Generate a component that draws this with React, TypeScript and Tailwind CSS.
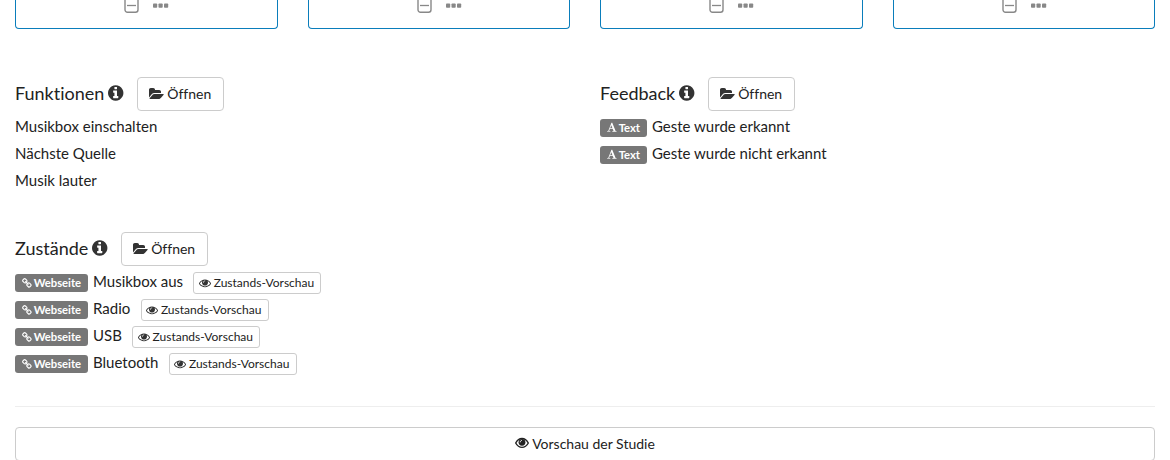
import React from "react";

const GLYPHS = {
  info: { w: 1536, x: 128, d: "M1152 1376v-160q0-14-9-23t-23-9h-96v-512q0-14-9-23t-23-9h-320q-14 0-23 9t-9 23v160q0 14 9 23t23 9h96v320h-96q-14 0-23 9t-9 23v160q0 14 9 23t23 9h448q14 0 23-9t9-23zm-128-896v-160q0-14-9-23t-23-9h-192q-14 0-23 9t-9 23v160q0 14 9 23t23 9h192q14 0 23-9t9-23zm640 416q0 209-103 385.5t-279.5 279.5-385.5 103-385.5-103-279.5-279.5-103-385.5 103-385.5 279.5-279.5 385.5-103 385.5 103 279.5 279.5 103 385.5z" },
  eye: { w: 1792, x: 0, d: "M1664 960q-152-236-381-353 61 104 61 225 0 185-131.5 316.5t-316.5 131.5-316.5-131.5-131.5-316.5q0-121 61-225-229 117-381 353 133 205 333.5 326.5t434.5 121.5 434.5-121.5 333.5-326.5zm-720-384q0-20-14-34t-34-14q-125 0-214.5 89.5t-89.5 214.5q0 20 14 34t34 14 34-14 14-34q0-86 61-147t147-61q20 0 34-14t14-34zm848 384q0 34-20 69-140 230-376.5 368.5t-499.5 138.5-499.5-139-376.5-368q-20-35-20-69t20-69q140-229 376.5-368t499.5-139 499.5 139 376.5 368q20 35 20 69z" },
  link: { w: 1664, x: 64, d: "M1520 1216q0-40-28-68l-208-208q-28-28-68-28-42 0-72 32 3 3 19 18.5t21.5 21.5 15 19 13 25.5 3.5 27.5q0 40-28 68t-68 28q-15 0-27.5-3.5t-25.5-13-19-15-21.5-21.5-18.5-19q-33 31-33 73 0 40 28 68l206 207q27 27 68 27 40 0 68-26l147-146q28-28 28-67zm-703-705q0-40-28-68l-206-207q-28-28-68-28-39 0-68 27l-147 146q-28 28-28 67 0 40 28 68l208 208q27 27 68 27 42 0 72-31-3-3-19-18.5t-21.5-21.5-15-19-13-25.5-3.5-27.5q0-40 28-68t68-28q15 0 27.5 3.5t25.5 13 19 15 21.5 21.5 18.5 19q33-31 33-73zm895 705q0 120-85 203l-147 146q-83 83-203 83-121 0-204-85l-206-207q-83-83-83-203 0-123 88-209l-88-88q-86 88-208 88-120 0-204-84l-208-208q-84-84-84-204t85-203l147-146q83-83 203-83 121 0 204 85l206 207q83 83 83 203 0 123-88 209l88 88q86-88 208-88 120 0 204 84l208 208q84 84 84 204z" },
  folder: { w: 1920, x: 0, d: "M1879 952q0 31-31 66l-336 396q-43 51-120.5 86.5t-143.5 35.5h-1088q-34 0-60.5-13t-26.5-43q0-31 31-66l336-396q43-51 120.5-86.5t143.5-35.5h1088q34 0 60.5 13t26.5 43zm-343-344v160h-832q-94 0-197 47.5t-164 119.5l-337 396-5 6q0-4-.5-12.5t-.5-12.5v-960q0-92 66-158t158-66h320q92 0 158 66t66 158v32h544q92 0 158 66t66 158z" },
  font: { w: 1664, x: 0, d: "M725 559l-170 450q33 0 136.5 2t160.5 2q19 0 57-2-87-253-184-452zm-725 1105l2-79q23-7 56-12.5t57-10.5 49.5-14.5 44.5-29 31-50.5l237-616 280-724h128q8 14 11 21l205 480q33 78 106 257.5t114 274.5q15 34 58 144.5t72 168.5q20 45 35 57 19 15 88 29.5t84 20.5q6 38 6 57 0 4-.5 13t-.5 13q-63 0-190-8t-191-8q-76 0-215 7t-178 8q0-43 4-78l131-28q1 0 12.5-2.5t15.5-3.5 14.5-4.5 15-6.5 11-8 9-11 2.5-14q0-16-31-96.5t-72-177.5-42-100l-450-2q-26 58-76.5 195.5t-50.5 162.5q0 22 14 37.5t43.5 24.5 48.5 13.5 57 8.5 41 4q1 19 1 58 0 9-2 27-58 0-174.5-10t-174.5-10q-8 0-26.5 4t-21.5 4q-80 14-188 14z" },
};

function Icon({ name, className = "" }: { name: keyof typeof GLYPHS; className?: string }) {
  const g = GLYPHS[name];
  return (
    <svg viewBox={`${g.x} 0 ${g.w} 1792`} className={`h-[1em] w-auto shrink-0 ${className}`} fill="currentColor" aria-hidden="true">
      <path d={g.d} />
    </svg>
  );
}

function BoldEye() {
  return (
    <svg width="14" height="12" viewBox="0 0 14 12" className="shrink-0" aria-hidden="true">
      <path d="M.7 6C2.2 3.2 4.4 1.5 7 1.5S11.8 3.2 13.3 6C11.8 8.8 9.6 10.4 7 10.4S2.2 8.8.7 6z" fill="none" stroke="currentColor" strokeWidth="1.4" />
      <circle cx="7" cy="5.3" r="3.4" fill="currentColor" />
      <path d="M5.2 5.3C5.2 4.3 5.8 3.6 6.9 3.4" fill="none" stroke="white" strokeWidth="1" />
    </svg>
  );
}

function SectionHeader({ title }: { title: string }) {
  return (
    <div className="flex h-[34px] items-center">
      <h4 className="flex items-center gap-1 pb-[2px] text-[18px] leading-[32px]">
        {title}
        <Icon name="info" className="text-[18px] text-[#333]" />
      </h4>
      <button className="ml-[12.85px] flex h-[34px] w-[87.3px] items-center justify-center gap-[3px] rounded-[4px] border border-[#ccc] text-[14px]">
        <Icon name="folder" className="text-[#333]" />
        <span className="pb-[2px]">Öffnen</span>
      </button>
    </div>
  );
}

function Tag({ icon, label, className }: { icon: "font" | "link"; label: string; className: string }) {
  return (
    <span className={`mt-[2px] mr-[5px] flex h-[18px] items-center justify-center gap-[2px] rounded-[3px] bg-[#777] text-[11.25px] font-bold text-white ${className}`}>
      <Icon name={icon} className={icon === "link" ? "mt-px text-[10.5px]" : "text-[10.5px]"} />
      {label}
    </span>
  );
}

function StateRow({ name }: { name: string }) {
  return (
    <li className="flex h-[27px] items-center">
      <Tag icon="link" label="Webseite" className="w-[73px]" />
      {name}
      <button className="mt-[2px] ml-[10.4px] flex h-[22px] w-[128px] items-center justify-center gap-[3px] rounded-[3px] border border-[#ccc] pr-[2px] text-[12px]">
        <Icon name="eye" className="text-[#333]" />
        Zustands-Vorschau
      </button>
    </li>
  );
}

function ElementCard() {
  return (
    <div className="flex h-[29px] justify-center rounded-b-[4px] border border-t-0 border-[#0a7dbb] pl-[0.5px] text-[#888]">
      <svg width="45" height="14" viewBox="0 0 45 14" fill="none" aria-hidden="true">
        <rect x="1" y="-5" width="13" height="17.3" rx="2.5" stroke="currentColor" strokeWidth="1.4" />
        <path d="M3 5.5h9" stroke="currentColor" strokeWidth="1.3" />
        <rect x="29" y="3.5" width="4.2" height="4.2" rx="0.8" fill="currentColor" />
        <rect x="34.5" y="3.5" width="4.2" height="4.2" rx="0.8" fill="currentColor" />
        <rect x="40" y="3.5" width="4.2" height="4.2" rx="0.8" fill="currentColor" />
      </svg>
    </div>
  );
}

export default function App() {
  return (
    <main className="h-[460px] overflow-hidden bg-white px-[15px] font-['Lato',sans-serif] text-[15px] leading-[21px] text-[#222] [font-variant-ligatures:none]">
      <div className="grid grid-cols-4 gap-[30px]">
        {[0, 1, 2, 3].map((n) => <ElementCard key={n} />)}
      </div>

      <div className="mt-12 grid grid-cols-2 gap-[30px]">
        <section>
          <SectionHeader title="Funktionen" />
          <ul className="mt-[2px]">
            {["Musikbox einschalten", "Nächste Quelle", "Musik lauter"].map((name) => (
              <li key={name} className="flex h-[27px] items-center">{name}</li>
            ))}
          </ul>
        </section>
        <section>
          <SectionHeader title="Feedback" />
          <ul className="mt-[2px]">
            {["Geste wurde erkannt", "Geste wurde nicht erkannt"].map((name) => (
              <li key={name} className="flex h-[27px] items-center">
                <Tag icon="font" label="Text" className="w-[47px]" />
                {name}
              </li>
            ))}
          </ul>
        </section>
      </div>

      <section className="mt-[38px]">
        <SectionHeader title="Zustände" />
        <ul className="mt-[2px]">
          {["Musikbox aus", "Radio", "USB", "Bluetooth"].map((name) => <StateRow key={name} name={name} />)}
        </ul>
      </section>

      <hr className="mt-[30px] border-[#eee]" />
      <button className="mt-5 flex h-[34px] w-full items-center justify-center gap-[3px] rounded-[4px] border border-[#ccc] pb-[2px] text-[14px]">
        <BoldEye />
        Vorschau der Studie
      </button>
    </main>
  );
}
